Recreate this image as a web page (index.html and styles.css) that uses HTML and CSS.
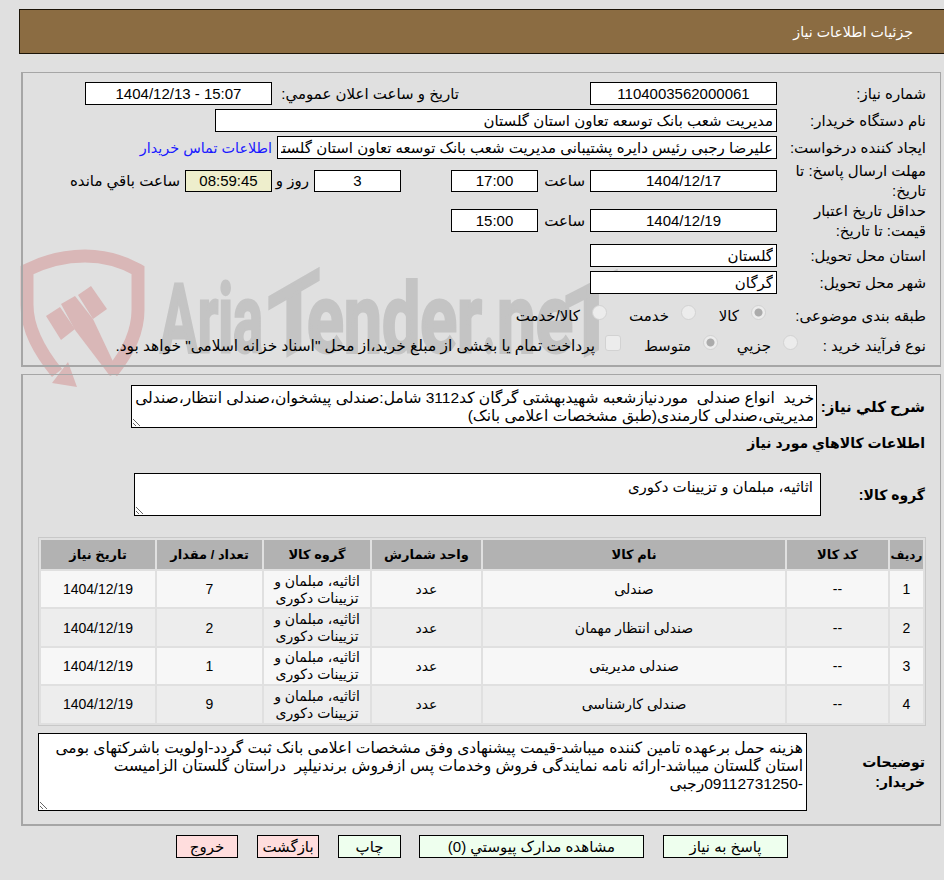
FILE: index.html
```html
<!DOCTYPE html>
<html lang="fa" dir="rtl">
<head>
<meta charset="utf-8">
<title>جزئیات اطلاعات نیاز</title>
<link rel="stylesheet" href="styles.css">
</head>
<body>
<svg class="watermark" width="640" height="150" viewBox="0 240 640 150" aria-hidden="true">
  <path class="shield" d="M57 373C40 352 27 330 27 305V270C45 261 65 256 85 256C105 256 122 261 138 270V310C138 335 126 355 112 372"/>
  <path class="gavel" d="M46 316L60 307L75 329L61 340Z"/>
  <path class="gavel" d="M61 304L75 296L93 319L118 372L110 376L75 330Z"/>
  <path class="gavel" d="M78 295L91 286L107 309L93 319Z"/>
  <path class="gavel" d="M52 383L68 362L77 387Z"/>
  <text class="mark" x="160" y="352" textLength="103" lengthAdjust="spacingAndGlyphs">Aria</text>
  <text class="mark" textLength="52" lengthAdjust="spacingAndGlyphs" transform="translate(268 367) skewY(-30)">T</text>
  <text class="mark" x="307" y="352" textLength="175" lengthAdjust="spacingAndGlyphs">ender</text>
  <text class="mark" x="483" y="352" textLength="12" lengthAdjust="spacingAndGlyphs">.</text>
  <text class="mark" x="497" y="352" textLength="76" lengthAdjust="spacingAndGlyphs">ne</text>
  <text class="mark" textLength="53" lengthAdjust="spacingAndGlyphs" transform="translate(565 366) skewY(-27)">T</text>
</svg>
<div class="page">
  <header class="title-bar">جزئیات اطلاعات نیاز</header>

  <section class="panel info">
    <div class="row r1">
      <span class="label">شماره نیاز:</span>
      <input class="box date" value="1104003562000061" readonly>
      <span class="announce">تاریخ و ساعت اعلان عمومي:</span>
      <input class="box date ltr" value="1404/12/13 - 15:07" readonly>
    </div>
    <div class="row r1">
      <span class="label">نام دستگاه خریدار:</span>
      <input class="box start buyer" value="مدیریت شعب بانک توسعه تعاون استان گلستان" readonly>
    </div>
    <div class="row r1">
      <span class="label">ایجاد کننده درخواست:</span>
      <input class="box start creator" value="علیرضا رجبی رئیس دایره پشتیبانی مدیریت شعب بانک توسعه تعاون استان گلستان" readonly>
      <a class="contact" href="#">اطلاعات تماس خریدار</a>
    </div>
    <div class="row r2 gap-deadline">
      <span class="label">مهلت ارسال پاسخ: تا تاریخ:</span>
      <input class="box date slim" value="1404/12/17" readonly>
      <span class="hour">ساعت</span>
      <input class="box time slim" value="17:00" readonly>
      <input class="box days slim" value="3" readonly>
      <span class="day-label">روز و</span>
      <input class="box timer slim" value="08:59:45" readonly>
      <span class="remain">ساعت باقي مانده</span>
    </div>
    <div class="row r2 gap-price">
      <span class="label">حداقل تاریخ اعتبار قیمت: تا تاریخ:</span>
      <input class="box date" value="1404/12/19" readonly>
      <span class="hour">ساعت</span>
      <input class="box time" value="15:00" readonly>
    </div>
    <div class="row r1 gap-province">
      <span class="label">استان محل تحویل:</span>
      <input class="box date start" value="گلستان" readonly>
    </div>
    <div class="row r1">
      <span class="label">شهر محل تحویل:</span>
      <input class="box date start" value="گرگان" readonly>
    </div>
    <div class="row r3 subject">
      <span class="label subject-label">طبقه بندی موضوعی:</span>
      <label class="opt o-goods"><input type="radio" name="s" checked disabled>کالا</label>
      <label class="opt o-service"><input type="radio" name="s" disabled>خدمت</label>
      <label class="opt"><input type="radio" name="s" disabled>کالا/خدمت</label>
    </div>
    <div class="row r3 process">
      <span class="label process-label">نوع فرآیند خرید :</span>
      <label class="opt o-minor"><input type="radio" name="p" disabled>جزیي</label>
      <label class="opt o-medium"><input type="radio" name="p" checked disabled>متوسط</label>
      <label class="opt treasury"><input class="check" type="checkbox" disabled>پرداخت تمام یا بخشی از مبلغ خرید،از محل "اسناد خزانه اسلامی" خواهد بود.</label>
    </div>
  </section>

  <section class="panel needs">
    <div class="desc-row">
      <span class="label strong">شرح کلي نیاز:</span>
      <textarea class="area desc" readonly>خرید  انواع صندلی  موردنیازشعبه شهیدبهشتی گرگان کد3112 شامل:صندلی پیشخوان،صندلی انتظار،صندلی مدیریتی،صندلی کارمندی(طبق مشخصات اعلامی بانک)</textarea>
    </div>
    <h2 class="section-title">اطلاعات کالاهاي مورد نیاز</h2>
    <div class="group-row">
      <span class="label strong">گروه کالا:</span>
      <textarea class="area group" readonly>اثاثیه، مبلمان و تزیینات دکوری</textarea>
    </div>
    <table class="items">
      <thead>
        <tr><th class="c-no">ردیف</th><th class="c-code">کد کالا</th><th class="c-name">نام کالا</th><th class="c-unit">واحد شمارش</th><th class="c-grp">گروه کالا</th><th class="c-qty">تعداد / مقدار</th><th class="c-date">تاریخ نیاز</th></tr>
      </thead>
      <tbody>
        <tr><td>1</td><td>--</td><td>صندلی</td><td>عدد</td><td>اثاثیه، مبلمان و تزیینات دکوری</td><td>7</td><td>1404/12/19</td></tr>
        <tr><td>2</td><td>--</td><td>صندلی انتظار مهمان</td><td>عدد</td><td>اثاثیه، مبلمان و تزیینات دکوری</td><td>2</td><td>1404/12/19</td></tr>
        <tr><td>3</td><td>--</td><td>صندلی مدیریتی</td><td>عدد</td><td>اثاثیه، مبلمان و تزیینات دکوری</td><td>1</td><td>1404/12/19</td></tr>
        <tr><td>4</td><td>--</td><td>صندلی کارشناسی</td><td>عدد</td><td>اثاثیه، مبلمان و تزیینات دکوری</td><td>9</td><td>1404/12/19</td></tr>
      </tbody>
    </table>
    <div class="notes-row">
      <span class="label strong notes-label">توضیحات خریدار:</span>
      <textarea class="area notes" readonly>هزینه حمل برعهده تامین کننده میباشد-قیمت پیشنهادی وفق مشخصات اعلامی بانک ثبت گردد-اولویت باشرکتهای بومی استان گلستان میباشد-ارائه نامه نمایندگی فروش وخدمات پس ازفروش برندنیلپر  دراستان گلستان الزامیست -09112731250رجبی</textarea>
    </div>
  </section>

  <footer class="actions">
    <button class="btn ok b-reply">پاسخ به نیاز</button>
    <button class="btn ok b-docs">مشاهده مدارک پیوستي (0)</button>
    <button class="btn ok b-print">چاپ</button>
    <button class="btn no">بازگشت</button>
    <button class="btn no">خروج</button>
  </footer>
</div>
</body>
</html>
```
FILE: styles.css
```css
* { box-sizing: border-box; }
html, body { margin: 0; padding: 0; }
body {
  width: 944px;
  height: 880px;
  overflow: hidden;
  background: #e0e0e0;
  color: #000;
  font-family: "Liberation Sans", "DejaVu Sans", sans-serif;
  font-size: 15px;
  position: relative;
}
.watermark { position: absolute; left: 0; top: 240px; }
.shield { fill: none; stroke: #d9b7b7; stroke-width: 13; }
.gavel { fill: #d9b7b7; }
.mark {
  direction: ltr;
  font-family: "Roboto", sans-serif;
  font-weight: 700;
  font-size: 97px;
  fill: #c4c4c4;
  stroke: #c4c4c4;
  stroke-width: 3;
}
.page { position: relative; padding: 9px 0 0 19px; direction: rtl; }
.title-bar {
  height: 45px;
  width: 925px;
  background: #8b6c42;
  border: 1px solid #1c1408;
  border-right: 0;
  color: #fff;
  font-size: 14.2px;
  padding: 13px 31px 0 0;
  line-height: 18px;
}
.panel { width: 920px; margin-right: 3px; border: 1px solid #a6a6a6; border-width: 1px 1px 2px 2px; }
.info { margin-top: 18px; height: 295px; padding: 9px 14px 0 0; }
.row { display: flex; align-items: center; }
.r1 { height: 23px; margin-bottom: 4px; }
.r2 { height: 23px; }
.r3 { height: 24px; }
.label { width: 149px; flex: none; line-height: 20px; }
.box {
  height: 23px;
  border: 1px solid #000;
  background: #fff;
  font: inherit;
  text-align: center;
  color: #000;
  padding: 0 3px;
  border-radius: 0;
  outline: none;
}
.slim { height: 22px; }
.date { width: 187px; }
.start { text-align: right; }
.buyer { width: 562px; }
.creator { width: 500px; }
.contact { color: #1a1aff; text-decoration: none; margin-right: 5px; white-space: nowrap; font-size: 14.4px; }
.announce { margin-right: 131px; width: 187px; white-space: nowrap; flex: none; }
.ltr { direction: ltr; }
.gap-deadline { margin-top: 10px; }
.gap-price { margin-top: 17px; }
.gap-province { margin-top: 12px; }
.hour { width: 52px; padding-right: 5px; flex: none; }
.time { width: 87px; }
.days { width: 87px; margin-right: 50px; }
.day-label { width: 42px; padding-right: 5px; flex: none; }
.timer { width: 87px; background: #eeeecc; }
.remain { margin-right: 5px; white-space: nowrap; }
.opt { display: inline-flex; align-items: center; white-space: nowrap; }
.opt input {
  appearance: none;
  margin: 0 0 7px 12px;
  width: 15px;
  height: 15px;
  flex: none;
  background: #ececec;
  border: 1px solid #d2d2d2;
  border-radius: 50%;
}
.opt input:checked { background: radial-gradient(circle, #ababab 0 3.5px, #ececec 4.5px); }
.opt .check { width: 16px; height: 16px; border-radius: 3px; margin-left: 10px; }
.treasury { font-size: 15.4px; }
.subject { margin-top: 10px; }
.process { margin-top: 6px; }
.subject-label { width: 160px; }
.process-label { width: 128px; }
.o-goods { width: 70px; }
.o-service { width: 89px; }
.o-minor { width: 80px; }
.o-medium { width: 97px; }
.needs { margin-top: 7px; height: 452px; padding: 10px 15px 0 0; position: relative; }
.desc-row, .group-row, .notes-row { display: flex; align-items: center; }
.strong { font-weight: bold; font-size: 14px; }
.desc-row .label { width: 108px; font-size: 15px; }
.area {
  border: 1px solid #000;
  background: #fff;
  font: inherit;
  font-size: 15.5px;
  color: #000;
  border-radius: 0;
  outline: none;
  padding: 3px 2px 0 0;
  overflow: hidden;
  resize: both;
  line-height: 18px;
  display: block;
  flex: none;
}
.desc { width: 686px; height: 43px; }
.section-title { margin: 6px 0 0; font-size: 14px; font-weight: bold; height: 18px; line-height: 18px; }
.group-row { margin-top: 21px; }
.group-row .label { width: 104px; }
.group { width: 687px; height: 43px; padding: 4px 7px 0; font-size: 15px; }
.items {
  width: 888px;
  margin: 21px -1px 0 0;
  border-collapse: separate;
  border-spacing: 2px;
  border: 1px solid #c8c8c8;
  table-layout: fixed;
  text-align: center;
}
.items th { background: #b2b2b2; height: 29px; padding: 0; font-size: 13px; font-weight: bold; }
.items th.c-no { font-size: 12px; }
.items td { height: 36.4px; padding: 1px 0 0; line-height: 17px; font-size: 14px; }
.items tbody tr:nth-child(odd) td { background: #f7f7f7; }
.items tbody tr:nth-child(even) td { background: #ededed; }
.c-no { width: 33px; }
.c-code { width: 101px; }
.c-name { width: 302px; }
.c-unit { width: 109px; }
.c-grp { width: 106px; }
.c-qty { width: 105px; }
.c-date { width: 114px; }
.notes-row { margin-top: 7px; }
.notes-label { width: 118px; padding-left: 20px; }
.notes { width: 769px; height: 78px; padding: 5px 3px 0; }
.actions { display: flex; gap: 19px; padding: 9px 156px 0 0; }
.btn {
  height: 23px;
  border: 1px solid #000;
  font: inherit;
  color: #000;
  padding: 0;
  border-radius: 0;
}
.ok { background: #eeffee; }
.no { background: #ffdddd; width: 62px; }
.b-reply { width: 125px; }
.b-docs { width: 225px; }
.b-print { width: 63px; margin-right: -1px; }
```
